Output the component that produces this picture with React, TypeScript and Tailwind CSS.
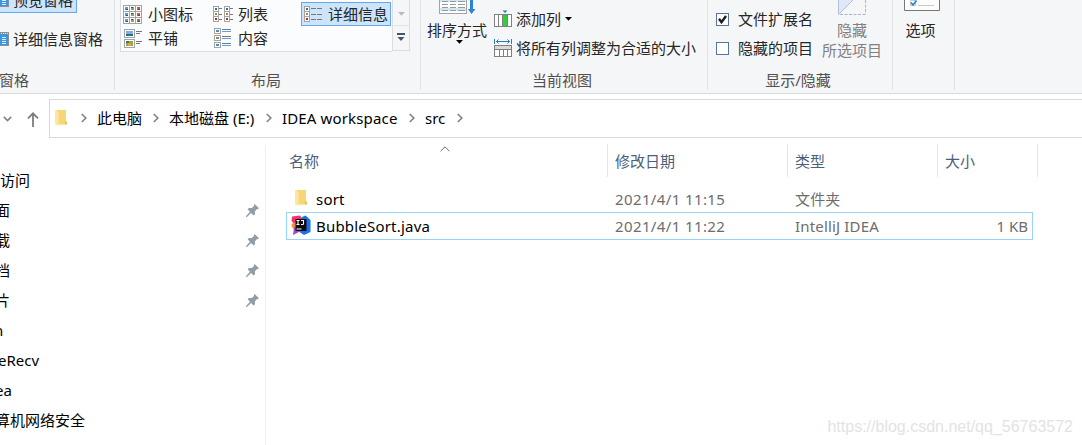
import type { ReactNode } from 'react';

const quickAccess = [
    { name: '访问', pinned: false, scroll: 'ml-0' },
    { name: '面', pinned: true, scroll: '-ml-[5px]' },
    { name: '载', pinned: true, scroll: '-ml-[5px]' },
    { name: '档', pinned: true, scroll: '-ml-[5px]' },
    { name: '片', pinned: true, scroll: '-ml-[5px]' },
    { name: 'n', pinned: false, scroll: '-ml-[6px]' },
    { name: 'eRecv', pinned: false, scroll: '-ml-[2px]' },
    { name: 'ea', pinned: false, scroll: '-ml-[5px]' },
    { name: '算机网络安全', pinned: false, scroll: '-ml-[5px]' },
];

export default function App() {
    return (
        <div className="relative flex h-[445px] w-[1082px] flex-col overflow-hidden bg-white font-['Noto_Sans','Noto_Sans_CJK_SC',sans-serif] text-[15px] leading-5 whitespace-nowrap text-black">
            <Ribbon />
            <AddressBar />
            <div className="flex min-h-0 flex-1">
                <Sidebar />
                <FileList />
            </div>
            <div className="absolute right-[9px] bottom-[8px] font-['Liberation_Sans',sans-serif] text-[16px] text-[#e3e3e3]">
                https://blog.csdn.net/qq_56763572
            </div>
        </div>
    );
}

function Ribbon() {
    return (
        <div className="flex h-[94px] shrink-0 border-b border-[#d9dadc] bg-[#f5f6f8] text-[#262626]">
            {/* Panes */}
            <div className="flex h-[90px] w-[115px] shrink-0 flex-col border-r border-[#e2e3e5]">
                <div className="-mt-3 flex h-[25px] w-[77px] items-center border-r border-b border-[#66a7e8] bg-[#cce4fc]">
                    <PaneIcon />
                    <span className="ml-1">预览窗格</span>
                </div>
                <div className="mt-4 flex h-5 items-center">
                    <PaneIcon />
                    <span className="ml-1">详细信息窗格</span>
                </div>
                <span className="mt-[21px] -ml-px text-[#505050]">窗格</span>
            </div>

            {/* Layout */}
            <div className="flex h-[90px] w-[306px] shrink-0 flex-col border-r border-[#e2e3e5] pl-[5px]">
                <div className="flex h-[52px]">
                    <div className="grid h-[52px] w-[272px] grid-cols-[90px_90px_90px] grid-rows-[24px_24px] content-start border-b border-l border-[#dcdde0] bg-[#fbfcfe] pt-[2px]">
                        <GalleryItem icon={<SmallIcons />}>小图标</GalleryItem>
                        <GalleryItem icon={<ListIcon />}>列表</GalleryItem>
                        <div className="flex h-6 w-[90px] items-center border border-[#66a7e8] bg-[#cce4fc] pl-[2px]">
                            <DetailsIcon />
                            <span className="ml-[5px]">详细信息</span>
                        </div>
                        <GalleryItem icon={<TilesIcon />}>平铺</GalleryItem>
                        <GalleryItem icon={<ContentIcon />}>内容</GalleryItem>
                    </div>
                    <div className="flex h-[51px] w-[18px] flex-col border-r border-b border-l border-[#dcdde0]">
                        <div className="flex h-[26px] items-end justify-center border-b border-[#e2e3e5] pb-[9px]">
                            <Triangle className="text-[#b5bac2]" />
                        </div>
                        <svg className="mx-auto mt-[7px]" width="8" height="8" viewBox="0 0 8 8" fill="#44546a">
                            <path d="M0 0h8v2H0zM.5 4h7L4 8z" />
                        </svg>
                    </div>
                </div>
                <span className="mt-[18px] pr-[8px] text-center text-[#505050]">布局</span>
            </div>

            {/* Current view */}
            <div className="flex h-[90px] w-[287px] shrink-0 flex-col border-r border-[#e2e3e5]">
                <div className="flex h-[70px]">
                    <div className="flex w-[73px] flex-col items-center pr-px">
                        <SortIcon />
                        <span className="mt-[6px]">排序方式</span>
                        <Triangle className="ml-[4px] text-black" />
                    </div>
                    <div className="flex flex-col pt-[9px]">
                        <div className="flex h-5 items-center">
                            <AddColumnIcon />
                            <span className="mr-[4px] ml-1">添加列</span>
                            <Triangle className="text-black" />
                        </div>
                        <div className="mt-[9px] flex h-5 items-center">
                            <FitColumnsIcon />
                            <span className="ml-1">将所有列调整为合适的大小</span>
                        </div>
                    </div>
                </div>
                <span className="pr-[4px] text-center text-[#505050]">当前视图</span>
            </div>

            {/* Show / hide */}
            <div className="flex h-[90px] w-[185px] shrink-0 flex-col border-r border-[#e2e3e5]">
                <div className="flex h-[70px] pl-2">
                    <div className="flex w-[106px] flex-col pt-[9px]">
                        <CheckRow checked>文件扩展名</CheckRow>
                        <div className="h-[9px]" />
                        <CheckRow>隐藏的项目</CheckRow>
                    </div>
                    <div className="flex flex-col items-center text-[#808080]">
                        <HideIcon />
                        <span className="mt-1">隐藏</span>
                        <span>所选项目</span>
                    </div>
                </div>
                <span className="pr-[4px] text-center text-[#505050]">显示/隐藏</span>
            </div>

            <div className="flex h-[90px] w-[62px] shrink-0 flex-col items-center border-r border-[#e2e3e5] pr-1">
                <OptionsIcon />
                <span className="mt-2 mr-[2px]">选项</span>
            </div>
        </div>
    );
}

function GalleryItem({ icon, children }: { icon: ReactNode; children: ReactNode }) {
    return (
        <div className="flex h-6 items-center pl-[2px]">
            {icon}
            <span className="ml-[6px]">{children}</span>
        </div>
    );
}

function CheckRow({ checked, children }: { checked?: boolean; children: ReactNode }) {
    return (
        <div className="flex h-5 items-center">
            <div className="h-[13px] w-[13px] border border-[#5a72a0] bg-white">
                {checked && (
                    <svg width="11" height="11" viewBox="0 0 11 11" fill="none" stroke="#1e1e1e" strokeWidth="2.4">
                        <path d="M2 4.8l2.5 3.4L9 2" />
                    </svg>
                )}
            </div>
            <span className="ml-[9px]">{children}</span>
        </div>
    );
}

function AddressBar() {
    return (
        <div className="flex h-[50px] shrink-0 pt-[5px]">
            <div className="flex h-[39px] w-[49px] shrink-0 items-center pl-[3px]">
                <svg width="9" height="6" viewBox="0 0 9 6" fill="none" stroke="#858585" strokeWidth="1.7">
                    <path d="M.8 .8l3.7 3.7L8.2 .8" />
                </svg>
                <svg className="mt-[2px] ml-[15px]" width="12" height="15" viewBox="0 0 12 15" fill="none" stroke="#7d7d7d" strokeWidth="1.8">
                    <path d="M6 15V1.3M1 6.3l5-5 5 5" />
                </svg>
            </div>
            <div className="flex h-[39px] flex-1 items-center border-y border-l border-[#d9d9d9] pb-[2px] pl-[4px]">
                <FolderIcon />
                <Chevron className="ml-[13px]" />
                <span className="ml-[10px] w-[46px]">此电脑</span>
                <Chevron className="ml-[10px]" />
                <span className="ml-[10px] w-[87px]">本地磁盘 (E:)</span>
                <Chevron className="ml-[10px]" />
                <span className="ml-[10px] w-[117px] tracking-[0.15px]">IDEA workspace</span>
                <Chevron className="ml-[10px]" />
                <span className="ml-[10px] w-[22px]">src</span>
                <Chevron className="ml-[10px]" />
            </div>
        </div>
    );
}

function Sidebar() {
    return (
        <div className="mt-px flex w-[266px] shrink-0 flex-col overflow-hidden border-r border-[#f0f0f0] pt-[20px]">
            {quickAccess.map((item) => (
                <div key={item.name} className="flex h-[30px] shrink-0 items-center justify-between pr-[6px]">
                    <span className={item.scroll}>{item.name}</span>
                    {item.pinned && <PinIcon />}
                </div>
            ))}
        </div>
    );
}

function FileList() {
    return (
        <div className="flex flex-1 flex-col">
            <div className="flex h-[33px] text-[#4c607a]">
                <div className="relative flex w-[342px] items-center border-r border-[#e5e5e5] pl-[23px]">
                    名称
                    <svg className="absolute top-[2px] left-[174px]" width="10" height="6" viewBox="0 0 10 6" fill="none" stroke="#666">
                        <path d="M.6 5.2L5 .8l4.4 4.4" />
                    </svg>
                </div>
                <div className="flex w-[180px] items-center border-r border-[#e5e5e5] pl-[7px]">修改日期</div>
                <div className="flex w-[150px] items-center border-r border-[#e5e5e5] pl-[7px]">类型</div>
                <div className="flex w-[100px] items-center border-r border-[#e5e5e5] pl-[7px]">大小</div>
            </div>
            <div className="mt-2 ml-5 flex flex-col">
                <FileRow icon={<FolderIcon />} name="sort" date="2021/4/1 11:15" type="文件夹" />
                <FileRow icon={<IdeaIcon />} name="BubbleSort.java" date="2021/4/1 11:22" type="IntelliJ IDEA" size="1 KB" selected />
            </div>
        </div>
    );
}

interface FileRowProps {
    icon: ReactNode;
    name: string;
    date: string;
    type: string;
    size?: string;
    selected?: boolean;
}

function FileRow({ icon, name, date, type, size, selected }: FileRowProps) {
    return (
        <div className={`flex w-[747px] items-center border pr-1 text-[#6d6d6d] ${selected ? 'h-7 border-[#99d1ff]' : 'h-[27px] border-transparent'}`}>
            <div className="flex w-[29px] justify-center pr-[1px] pb-[2px]">{icon}</div>
            <span className="w-[299px] tracking-[0.2px] text-black">{name}</span>
            <span className="w-[180px] tracking-[0.38px]">{date}</span>
            <span className="w-[150px] tracking-[0.17px]">{type}</span>
            <span className="flex-1 text-right">{size}</span>
        </div>
    );
}

/* Icons */

function Triangle({ className }: { className: string }) {
    return (
        <svg className={className} width="7" height="4" viewBox="0 0 7 4" fill="currentColor">
            <path d="M0 0h7L3.5 3.8z" />
        </svg>
    );
}

function Chevron({ className }: { className: string }) {
    return (
        <svg className={`shrink-0 ${className}`} width="6" height="10" viewBox="0 0 6 10" fill="none" stroke="#858585" strokeWidth="1.7">
            <path d="M.8 1l4 4-4 4" />
        </svg>
    );
}

function FolderIcon() {
    return (
        <svg className="shrink-0" width="14" height="18" viewBox="0 0 14 18">
            <path d="M2.5 1H12v14.6H2.5z" fill="#f7d676" />
            <path d="M11 12l2 .6v3h-2z" fill="#f0c450" />
            <path d="M1 1l3.5 2.6V17L1 15.6z" fill="#fde7a2" />
        </svg>
    );
}

function IdeaIcon() {
    return (
        <svg width="20" height="20" viewBox="0 0 20 20">
            <path d="M1 1.5L9 .5l3 4L6 12 .5 6z" fill="#f5316f" />
            <path d="M.5 9L5 7v9l-4-4z" fill="#f58b3c" />
            <path d="M11 2l3.5-1.5L19.5 5v12L13 20l-6-4z" fill="#1c70ed" />
            <path d="M3 12l7 4-8 4z" fill="#a54bbd" />
            <path d="M4.5 4h11v12h-11z" fill="#0c0c10" />
            <path d="M5.5 5.5h3M7 5.5v4M5.5 9.5h3M10 5.5h2.5v3.2q0 .8-.8.8H10M5.5 14h5" fill="none" stroke="#fff" strokeWidth="1.1" />
        </svg>
    );
}

function PinIcon() {
    return (
        <svg width="13" height="13" viewBox="0 0 13 13" fill="#919ca5">
            <path d="M8.6 0L13 4.3l-1.3.9-.7-.1-2.2 2.3.2 2.9-1.3 1.3-2.6-2.6L1 12.9l-1 .1.1-1L4 7.7 1.6 5.2l1.3-1.3 3 .2L8 2V1.2z" />
        </svg>
    );
}

function PaneIcon() {
    return (
        <svg className="shrink-0" width="9" height="15" viewBox="0 0 9 15" shapeRendering="crispEdges">
            <path d="M0 0h9v14H0z" fill="#8a8f96" />
            <path d="M0 2h8v11H0z" fill="#3b96e0" />
            <path d="M1 1h1v1H1zM3 1h1v1H3zM5 1h1v1H5zM7 1h1v1H7z" fill="#d8ecfb" />
            <path d="M2 5h4v1H2zM2 7h4v1H2zM2 9h4v1H2zM2 11h4v1H2z" fill="#d8ecfb" />
        </svg>
    );
}

function SmallIcons() {
    const cells = [0, 1, 2];
    return (
        <svg className="shrink-0" width="19" height="19" viewBox="0 0 19 19" shapeRendering="crispEdges">
            <path d="M0 0h19v19H0z" fill="#a3a3a3" />
            {cells.map((r) =>
                cells.map((c) => (
                    <g key={`${r}${c}`} transform={`translate(${c * 6 + 1} ${r * 6 + 1})`}>
                        <path d="M0 0h5v5H0z" fill="#fff" />
                        <path d="M1 1h3v3H1z" fill={['#5f9bd1', '#86a46c', '#d2553f'][c]} />
                        <path d={c === 1 ? 'M1 1h2v1H1z' : 'M2 3h2v1H2z'} fill="#2e5364" />
                    </g>
                )),
            )}
        </svg>
    );
}

function TilesIcon() {
    return (
        <svg className="shrink-0" width="19" height="19" viewBox="0 0 19 19" shapeRendering="crispEdges">
            <path d="M1.5 .5h10v8h-10zM1.5 10.5h10v8h-10z" fill="#fff" stroke="#a3a3a3" />
            <path d="M3 2h7v3H3z" fill="#78b2e6" />
            <path d="M3 5h7v2H3z" fill="#2f6f7c" />
            <path d="M3 12h7v5H3z" fill="#87ad4b" />
            <path d="M5 14h3v3H5z" fill="#e0a83c" />
            <path d="M3 12h3v2H3z" fill="#496f72" />
            <path d="M13 2h6v1h-6zM13 4h4v1h-4zM13 12h6v1h-6zM13 14h4v1h-4z" fill="#777" />
        </svg>
    );
}

function ListIcon() {
    return (
        <svg className="-mr-px shrink-0" width="20" height="17" viewBox="0 0 20 17" shapeRendering="crispEdges">
            <Strip x={0} />
            <Strip x={11} />
            <path d="M6 2h3v1H6zM6 8h3v1H6zM6 13h3v1H6zM17 2h3v1h-3zM17 8h3v1h-3zM17 13h3v1h-3z" fill="#777" />
        </svg>
    );
}

function DetailsIcon() {
    return (
        <svg className="shrink-0" width="19" height="17" viewBox="0 0 19 17" shapeRendering="crispEdges">
            <Strip x={0} />
            <path d="M7 2h5v1H7zM7 8h5v1H7zM7 13h5v1H7zM13 2h5v1h-5zM13 8h5v1h-5zM13 13h5v1h-5z" fill="#777" />
        </svg>
    );
}

function Strip({ x }: { x: number }) {
    return (
        <g transform={`translate(${x} 0)`}>
            <path d="M.5 .5h5v15h-5zM.5 5.5h5M.5 10.5h5" fill="#fff" stroke="#a3a3a3" />
            <path d="M2 2h2v2H2z" fill="#36738e" />
            <path d="M2 7h2v2H2z" fill="#b08546" />
            <path d="M2 12h2v2H2z" fill="#b32c20" />
        </g>
    );
}

function ContentIcon() {
    return (
        <svg className="shrink-0" width="19" height="20" viewBox="0 0 19 20" shapeRendering="crispEdges">
            <path d="M1.5 .5h6v5h-6zM1.5 7.5h6v5h-6zM1.5 14.5h6v5h-6z" fill="#fff" stroke="#a3a3a3" />
            <path d="M3 2h3v2H3zM3 16h3v2H3z" fill="#4a8fc6" />
            <path d="M3 9h3v2H3z" fill="#9a8a4c" />
            <path d="M9 1h9v1H9zM9 8h9v1H9zM9 15h9v1H9z" fill="#777" />
            <path d="M9 3h9v1H9zM9 10h9v1H9zM9 17h9v1H9z" fill="#5f9fe8" />
        </svg>
    );
}

function SortIcon() {
    return (
        <svg className="shrink-0" width="37" height="14" viewBox="0 0 37 14">
            <g shapeRendering="crispEdges">
                <path d="M.5 -1h27v14.5H.5z" fill="#fff" stroke="#a3a3a3" />
                <path d="M1 0h26v2H1zM1 8h26v3H1z" fill="#cbe8f7" />
                <path d="M3 1h6v1H3zM11 1h6v1h-6zM19 1h7v1h-7zM3 4h6v1H3zM11 4h6v1h-6zM19 4h7v1h-7zM3 7h6v1H3zM11 7h6v1h-6zM19 7h7v1h-7zM3 10h6v1H3zM11 10h6v1h-6zM19 10h7v1h-7z" fill="#999" />
            </g>
            <path d="M31 0h3v9h2.5L32.5 14 29 9H31z" fill="#2a83d6" />
        </svg>
    );
}

function AddColumnIcon() {
    return (
        <svg className="shrink-0" width="18" height="18" viewBox="0 0 18 18">
            <path d="M8.5 .5h5L11 3z" fill="#2a78b8" />
            <g shapeRendering="crispEdges">
                <path d="M.5 4.5h17v12H.5zM4.5 4.5v12M8.5 4.5v12M13.5 4.5v12" fill="#fff" stroke="#808080" />
                <path d="M9 5h4v11H9z" fill="#2fd037" />
            </g>
        </svg>
    );
}

function FitColumnsIcon() {
    return (
        <svg className="shrink-0" width="18" height="18" viewBox="0 0 18 18">
            <path d="M.5 0v5M17.5 0v5M2 2.5h14M4.5 .5l-2 2 2 2M13.5 .5l2 2-2 2" fill="none" stroke="#2a78b8" />
            <g shapeRendering="crispEdges">
                <path d="M.5 6.5h17v11H.5z" fill="#fff" stroke="#808080" />
                <path d="M1 7h16v3H1z" fill="#d9d9d9" />
                <path d="M1 10.5h16M5.5 10v7M9.5 10v7M13.5 10v7" stroke="#808080" />
            </g>
        </svg>
    );
}

function HideIcon() {
    return (
        <svg className="shrink-0" width="28" height="16" viewBox="0 0 28 16">
            <path d="M.5 14V0H15z" fill="#dfe8f7" />
            <path d="M.5 0v14.5L15 0" fill="none" stroke="#b3c0db" />
            <path d="M2 14.5h26M27.5 0v14" fill="none" stroke="#a8b6d3" strokeDasharray="3 1.5" />
        </svg>
    );
}

function OptionsIcon() {
    return (
        <svg className="shrink-0" width="36" height="12" viewBox="0 0 36 12">
            <path d="M.5 -1h35v11.5H.5z" fill="#fcfcfc" stroke="#777" />
            <path d="M6.5 .5h5v5h-5z" fill="#fff" stroke="#c4c9d1" />
            <path d="M7 2.5l2 2.5 3.5-4.5" fill="none" stroke="#2585cf" strokeWidth="1.7" />
            <path d="M14 5.5h16" stroke="#c9c9c9" />
        </svg>
    );
}
